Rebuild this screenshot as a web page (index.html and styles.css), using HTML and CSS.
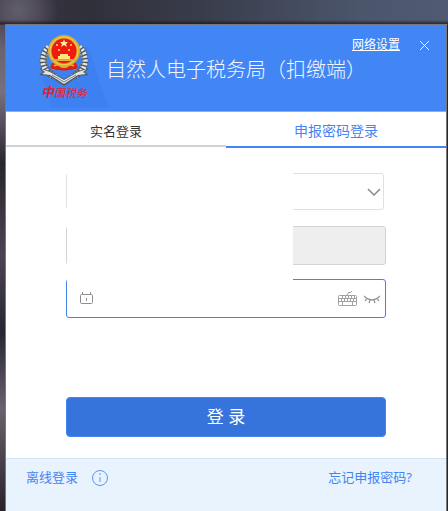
FILE: index.html
```html
<!DOCTYPE html>
<html lang="zh-CN">
<head>
<meta charset="utf-8">
<meta name="viewport" content="width=device-width, initial-scale=1">
<title>自然人电子税务局（扣缴端）</title>
<link rel="stylesheet" href="styles.css">
</head>
<body>
<main class="window">
  <header class="header">
    <svg class="header-shade" viewBox="0 0 66 62" aria-hidden="true"><path d="M46 0L66 62H10L0 33Z" fill="#3d80f1"/></svg>
    <div class="brand">
      <svg class="emblem" viewBox="0 0 50 52" aria-hidden="true">
        <g fill="none">
          <path d="M10 12C1 22 2 36 17 42M40 12C49 22 48 36 33 42" stroke="#4f5963" stroke-width="7"/>
          <path d="M10 12C1 22 2 36 17 42M40 12C49 22 48 36 33 42" stroke="#e4e8e4" stroke-width="6" stroke-dasharray="2 1.500"/>
          <path d="M9 15C4 24 6 34 17 40M41 15C46 24 44 34 33 40" stroke="#59646e" stroke-width="1.500" stroke-dasharray="2 1"/>
        </g>
        <path d="M13 28L11 33Q25 38 39 33L37 28Z" fill="#e31e0c"/>
        <path d="M15 31q4-3 8 1h4q4-4 8-1" fill="none" stroke="#d7aa2d" stroke-width="2"/>
        <circle cx="25" cy="16" r="16" fill="#d9ae32"/>
        <circle cx="25" cy="16" r="14" fill="none" stroke="#f0cf54" stroke-width="1"/>
        <circle cx="25" cy="16" r="12.500" fill="#f01b0c"/>
        <path d="M25 4l1 3h3l-2 2 1 3-3-2-3 2 1-3-2-2h3Z" fill="#fff1a0"/>
        <g fill="#ffe47b"><circle cx="18" cy="10" r="1"/><circle cx="32" cy="10" r="1"/><circle cx="20" cy="15" r="1"/><circle cx="30" cy="15" r="1"/><path d="M21 19h8v2h-8zM19 21h12v3H19z"/></g>
        <path d="M14 25h22" stroke="#d9ae32" stroke-width="2"/>
        <path d="M0 33l11 3 14 8 14-8 11-3-4 4 4 3-10 1-15 10-15-10-10-1 4-3Z" fill="#4d5b68"/>
        <path d="M2 34l9 3 14 8 14-8 9-3-4 3 3 2-8 1-14 9-14-9-8-1 3-2Z" fill="#e0e4e2"/>
        <path d="M13 40l12 7 12-7" fill="none" stroke="#778590" stroke-width="1"/>
      </svg>
      <span class="brand-name"><b>中</b>国税务</span>
    </div>
    <h1 class="title">自然人电子税务局（扣缴端）</h1>
    <nav class="window-tools">
      <a class="network" href="#network">网络设置</a>
      <button class="close" type="button" aria-label="关闭">
        <svg viewBox="0 0 10 10" aria-hidden="true"><path d="M0 0L10 10M10 0L0 10"/></svg>
      </button>
    </nav>
  </header>
  <nav class="tabs">
    <button class="tab" type="button">实名登录</button>
    <button class="tab tab-active" type="button">申报密码登录</button>
  </nav>
  <form class="form">
    <div class="field field-account">
      <select class="control" aria-label="账号"><option></option></select>
      <svg class="chevron" viewBox="0 0 14 8" aria-hidden="true"><path d="M1 1L7 7L13 1"/></svg>
    </div>
    <div class="field field-company"><input class="control" type="text" aria-label="单位" disabled></div>
    <div class="field field-password">
      <svg class="lock" viewBox="0 0 13 13" aria-hidden="true"><rect x=".5" y="2.500" width="12" height="9" rx="1"/><path d="M2.500 0v2M10.500 0v2M6.500 6v3"/></svg>
      <input class="control" type="password" aria-label="申报密码">
      <button class="tool" type="button" aria-label="软键盘">
        <svg class="keyboard" viewBox="0 0 20 16" aria-hidden="true"><rect x=".5" y="4.500" width="18" height="10" rx="1"/><path d="M9 4l2-3 1 1 2-2M1 7.500h18M1 10.500h18M4.500 5v3M7.500 5v3M10.500 5v3M13.500 5v3M16.500 5v3M3.500 8v3M6.500 8v3M9.500 8v3M12.500 8v3M15.500 8v3M4.500 11v3M14.500 11v3"/></svg>
      </button>
      <button class="tool" type="button" aria-label="显示密码">
        <svg class="eye" viewBox="0 0 16 9" aria-hidden="true"><path d="M0 1Q8 9 16 1M3 3L1 6M6 5L5 8M10 5L11 8M13 3L15 6"/></svg>
      </button>
    </div>
    <div class="privacy" aria-hidden="true"></div>
    <button class="submit" type="submit">登 录</button>
  </form>
  <footer class="footer">
    <a href="#offline">离线登录</a>
    <button class="info" type="button" aria-label="离线登录说明">
      <svg viewBox="0 0 16 16" aria-hidden="true"><circle cx="8" cy="8" r="7.500"/><path d="M8 7v5M8 3v2"/></svg>
    </button>
    <a class="forgot" href="#forgot">忘记申报密码?</a>
  </footer>
</main>
</body>
</html>
```

FILE: styles.css
```css
* { box-sizing: border-box; }

body {
  margin: 0;
  min-height: 100vh;
  padding: 24px 1px 0 5px;
  display: flex;
  font-family: "Noto Sans", "Noto Sans CJK SC", sans-serif;
  font-size: 13px;
  line-height: 20px;
  background:
    linear-gradient(180deg, transparent 20px, rgba(20, 18, 26, .7) 24px, transparent 25px),
    radial-gradient(ellipse 40px 40px at 18px 10px, #625f6d, #504c5a 50%, transparent),
    linear-gradient(90deg, #393642, #30303a 20%, #393d4b 45%, #4b556b 80%, #505b72) 0 0 / 100% 25px no-repeat,
    linear-gradient(180deg, #58525f, #77717f 18%, #29252e 32%, #4b4551 50%, #282630 65%, #69626e 80%, #282229) 0 0 / 5px 100% no-repeat,
    #25262e;
}

button, input, select { font: inherit; }
button { padding: 0; border: 0; background: none; }
a { color: #4285f4; text-decoration: none; }
svg { display: block; fill: none; }

.window {
  flex: 1;
  min-width: 0;
  display: flex;
  flex-direction: column;
  border: 1px solid #77777c;
  border-bottom: 0;
  background: #fff;
}

.header {
  position: relative;
  display: flex;
  align-items: flex-start;
  height: 87px;
  padding: 10px 17px 0 33px;
  border-bottom: 1px solid #83b3e8;
  background: #4285f5;
}
.header-shade { position: absolute; left: 36px; bottom: 3px; width: 66px; height: 62px; }
.brand { position: relative; width: 50px; }
.emblem { width: 50px; height: 52px; }
.brand-name {
  display: block;
  margin-top: -3px;
  text-align: center;
  white-space: nowrap;
  font-size: 11px;
  line-height: 16px;
  font-style: italic;
  color: #e5202a;
}
.brand-name b { font-size: 13px; }
.title {
  margin: 23px 0 0 17px;
  color: #f2f7ff;
  font-size: 20px;
  font-weight: 300;
  line-height: 24px;
  white-space: nowrap;
}
.window-tools {
  position: absolute;
  top: 10px;
  right: 17px;
  display: flex;
  align-items: center;
  gap: 20px;
}
.network { color: #fff; font-size: 12px; text-decoration: underline; }
.close { width: 9px; height: 9px; }
.close svg { width: 9px; height: 9px; stroke: #fff; stroke-width: 1; }

.tabs { display: flex; align-items: flex-start; height: 36px; }
.tab { flex: 1; height: 35px; padding-top: 4px; border-bottom: 2px solid #d0d1d7; color: #333; }
.tab-active { height: 36px; border-color: #4285f4; color: #4285f4; font-size: 14px; }

.form {
  position: relative;
  display: flex;
  flex-direction: column;
  padding: 25px 60px 21px;
}
.field { display: flex; align-items: center; height: 39px; border: 1px solid #d2d2d7; border-radius: 3px; }
.control { flex: 1; min-width: 0; height: 100%; padding: 0 8px; border: 0; outline: 0; background: transparent; appearance: none; }
.field-account { height: 37px; margin: 0 2px 16px 0; padding-right: 2px; border-color: #e0e0e0; }
.field-company { margin-bottom: 14px; background: #eee; }
.field-password { gap: 6px; margin-bottom: 79px; padding: 0 5px 0 13px; border-color: #4285e8; }
.chevron { width: 14px; height: 8px; stroke: #8a8a8a; stroke-width: 1.5; }
.lock { width: 13px; height: 13px; stroke: #8e8e8e; stroke-width: 1; }
.keyboard { width: 20px; height: 16px; stroke: #a2a2a2; stroke-width: 1; }
.eye { width: 16px; height: 9px; margin-top: 2px; stroke: #8a8a8a; stroke-width: 1.2; }
.privacy { position: absolute; top: 20px; left: 61px; right: 153px; height: 115px; background: #fff; }
.submit { height: 40px; border: 1px solid #4285f4; border-radius: 4px; background: #3674dc; color: #fff; font-size: 17px; }

.footer {
  flex: 1;
  display: flex;
  align-items: flex-start;
  gap: 14px;
  padding: 8px 34px 16px 20px;
  border-top: 1px solid #d0e3f5;
  background: #e8f3fe;
}
.info { margin-top: 3px; }
.info svg { width: 16px; height: 16px; stroke: #5c96f5; stroke-width: 1; }
.forgot { margin-left: auto; }
```
